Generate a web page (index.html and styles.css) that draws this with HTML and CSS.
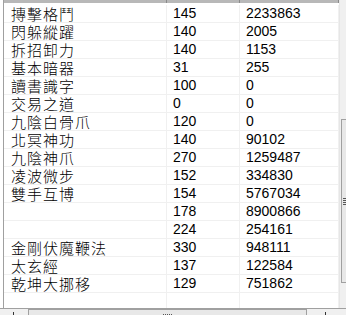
FILE: index.html
```html
<!DOCTYPE html>
<html>
<head>
<meta charset="utf-8">
<link rel="stylesheet" href="styles.css">
</head>
<body>
<div class="window">
  <div class="main">
    <div class="list">
      <div class="header">
        <div class="hcell"></div><div class="hcell"></div><div class="hcell"></div>
      </div>
      <div class="rows">
        <div class="row"><div class="cell name">摶擊格鬥</div><div class="cell num">145</div><div class="cell num">2233863</div></div>
        <div class="row"><div class="cell name">閃躲縱躍</div><div class="cell num">140</div><div class="cell num">2005</div></div>
        <div class="row"><div class="cell name">拆招卸力</div><div class="cell num">140</div><div class="cell num">1153</div></div>
        <div class="row"><div class="cell name">基本暗器</div><div class="cell num">31</div><div class="cell num">255</div></div>
        <div class="row"><div class="cell name">讀書識字</div><div class="cell num">100</div><div class="cell num">0</div></div>
        <div class="row"><div class="cell name">交易之道</div><div class="cell num">0</div><div class="cell num">0</div></div>
        <div class="row"><div class="cell name">九陰白骨爪</div><div class="cell num">120</div><div class="cell num">0</div></div>
        <div class="row"><div class="cell name">北冥神功</div><div class="cell num">140</div><div class="cell num">90102</div></div>
        <div class="row"><div class="cell name">九陰神爪</div><div class="cell num">270</div><div class="cell num">1259487</div></div>
        <div class="row"><div class="cell name">凌波微步</div><div class="cell num">152</div><div class="cell num">334830</div></div>
        <div class="row"><div class="cell name">雙手互博</div><div class="cell num">154</div><div class="cell num">5767034</div></div>
        <div class="row"><div class="cell name"></div><div class="cell num">178</div><div class="cell num">8900866</div></div>
        <div class="row"><div class="cell name"></div><div class="cell num">224</div><div class="cell num">254161</div></div>
        <div class="row"><div class="cell name">金剛伏魔鞭法</div><div class="cell num">330</div><div class="cell num">948111</div></div>
        <div class="row"><div class="cell name">太玄經</div><div class="cell num">137</div><div class="cell num">122584</div></div>
        <div class="row"><div class="cell name">乾坤大挪移</div><div class="cell num">129</div><div class="cell num">751862</div></div>
        <div class="row"><div class="cell name"></div><div class="cell num"></div><div class="cell num"></div></div>
      </div>
    </div>
    <div class="vscroll">
      <div class="vthumb"><span class="vgrip"></span></div>
    </div>
  </div>
  <div class="hscroll">
    <span class="arrow left"></span>
    <div class="hthumb"><span class="hgrip"></span></div>
    <span class="arrow right"></span>
  </div>
</div>
</body>
</html>
```

FILE: styles.css
```css
html, body {
  margin: 0;
  padding: 0;
  background: #ffffff;
}

.window {
  width: 346px;
  height: 315px;
  overflow: hidden;
  display: flex;
  flex-direction: column;
  font-family: "Liberation Sans", "Noto Sans CJK TC", sans-serif;
  font-size: 14px;
  color: #000;
}

.main {
  display: flex;
  height: 308px;
  flex: none;
}

.list {
  width: 336px;
  margin-left: 3px;
  border-left: 1px solid #a0a0a0;
  overflow: hidden;
  display: flex;
  flex-direction: column;
}

.header {
  display: grid;
  grid-template-columns: 163px 73px 99px;
  height: 3px;
  background: #b8b8b8;
  border-bottom: 2px solid #ffffff;
  flex: none;
}

.hcell {
  border-right: 1px solid #8a8a8a;
}

.row {
  display: grid;
  grid-template-columns: 163px 73px 99px;
  height: 18px;
  box-sizing: border-box;
  border-bottom: 1px solid #f0f0f0;
}

.cell {
  border-right: 1px solid #f0f0f0;
  line-height: 17px;
  white-space: nowrap;
}

.name {
  font-family: "Noto Sans CJK TC", sans-serif;
  font-size: 15px;
  font-weight: 300;
  letter-spacing: 1px;
  padding-left: 7px;
}

.num {
  padding-left: 6px;
}

.vscroll {
  width: 7px;
  flex: none;
  background: #f0f0f0;
  border-left: 1px solid #e6e6e6;
  box-sizing: border-box;
  padding-top: 119px;
}

.vthumb {
  height: 164px;
  margin-left: 1px;
  box-sizing: border-box;
  background: #e8e8e8;
  border: 1px solid #a0a0a0;
  border-right: none;
  display: flex;
  align-items: center;
  justify-content: center;
}

.vgrip {
  width: 3px;
  height: 7px;
  background: repeating-linear-gradient(to bottom, #555 0 1px, transparent 1px 2px);
}

.hscroll {
  height: 7px;
  flex: none;
  border-top: 1px solid #a0a0a0;
  background: #f0f0f0;
  display: flex;
  align-items: flex-start;
}

.arrow {
  width: 1px;
  height: 3px;
  background: #333;
  margin-top: 3px;
}

.arrow.left {
  margin-left: 13px;
}

.hthumb {
  margin-left: 14px;
  width: 279px;
  height: 7px;
  box-sizing: border-box;
  background: #e8e8e8;
  border: 1px solid #a0a0a0;
  border-bottom: none;
  display: flex;
  justify-content: center;
  padding-top: 4px;
}

.hgrip {
  width: 9px;
  height: 2px;
  background: repeating-linear-gradient(to right, #555 0 1px, transparent 1px 2px);
}

.arrow.right {
  margin-left: 18px;
}
```
